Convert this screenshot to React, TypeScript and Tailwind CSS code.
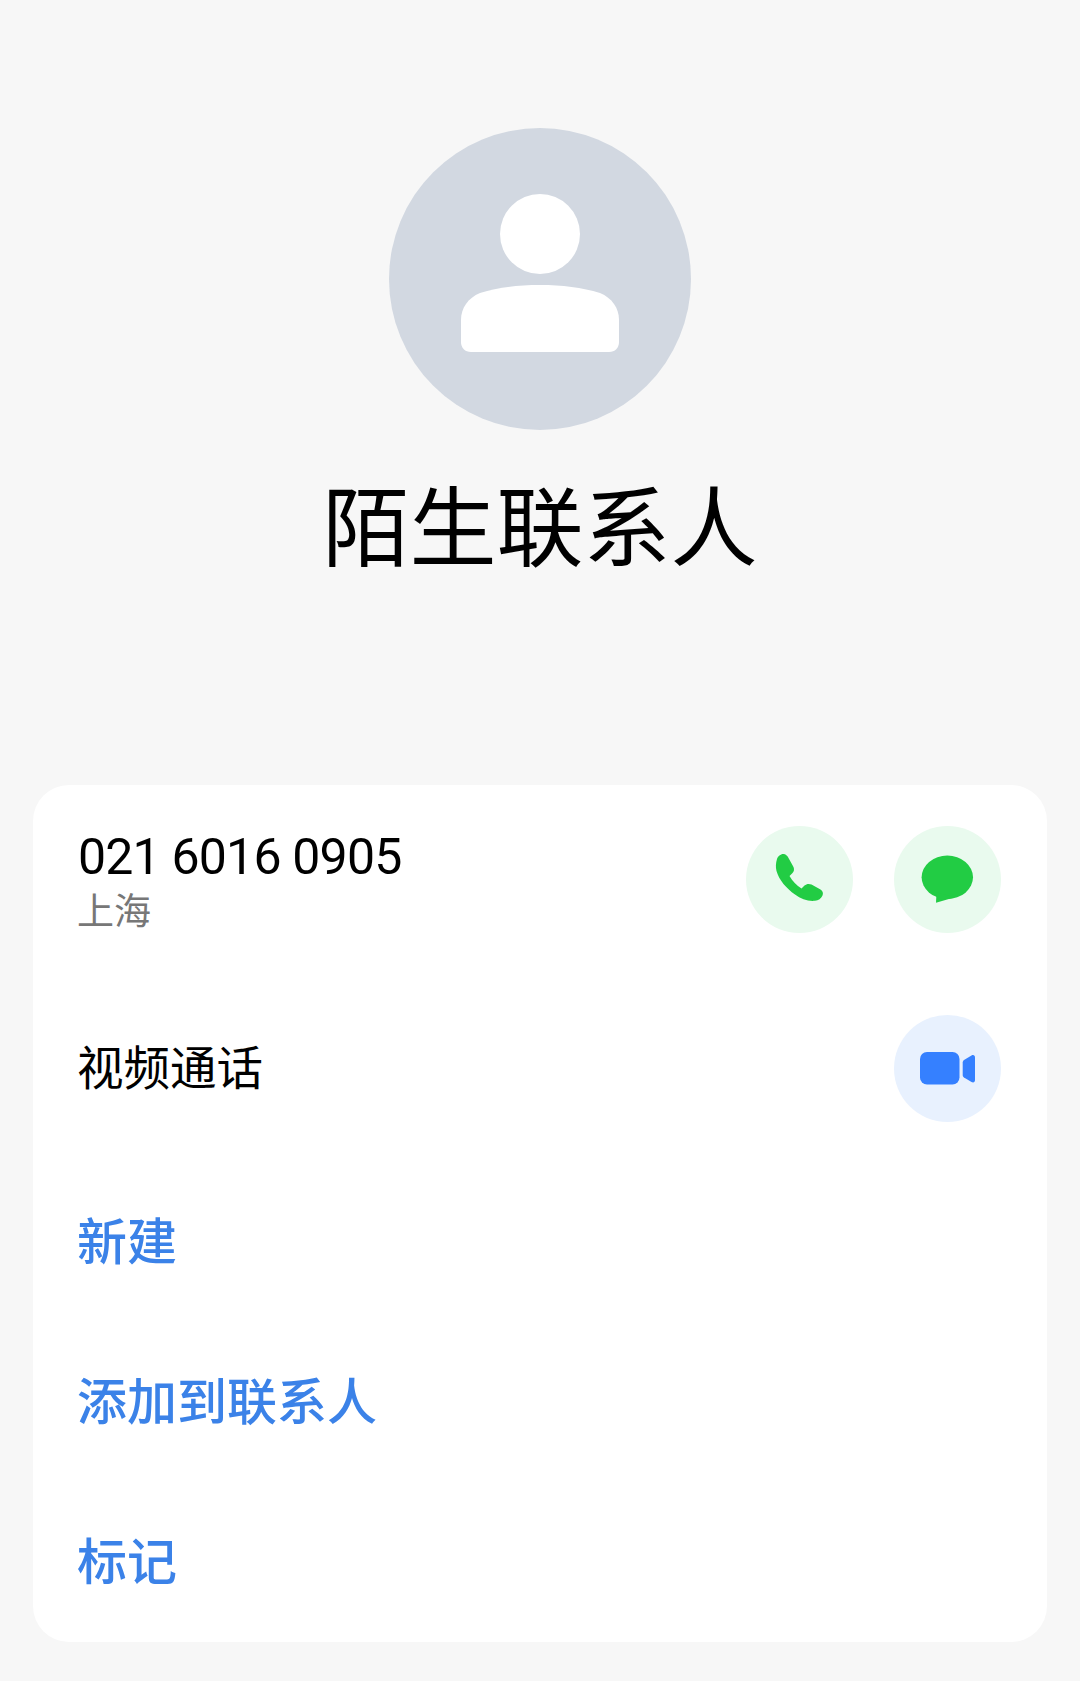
import React from "react";

const cjk = "font-['Noto_Sans_CJK_SC','Noto_Sans',sans-serif]";

function ActionButton({ bg, children }: { bg: string; children: React.ReactNode }) {
  return (
    <div className={`w-[107px] h-[107px] rounded-full shrink-0 ${bg}`}>
      <svg viewBox="0 0 107 107" className="w-full h-full">
        {children}
      </svg>
    </div>
  );
}

export default function App() {
  return (
    <div className={`w-[1080px] h-[1681px] bg-[#f7f7f7] overflow-hidden flex flex-col items-center pt-[128px] ${cjk}`}>
      {/* Avatar */}
      <div className="w-[302px] h-[302px] rounded-full bg-[#d2d8e1] shrink-0">
        <svg viewBox="0 0 302 302" className="w-full h-full">
          <circle cx="151" cy="106" r="40" fill="#fff" />
          <path
            d="M72 192C72 180 79 170 91 165C109 159.5 129 157 151 157C173 157 193 159.5 211 165C223 170 230 180 230 192V214C230 220 226 224 220 224H82C76 224 72 220 72 214Z"
            fill="#fff"
          />
        </svg>
      </div>

      <h1 className="mt-[34px] h-[116px] text-[87px] leading-[116px] font-normal text-black">陌生联系人</h1>

      {/* Detail card */}
      <div className="mt-[205px] w-[1014px] h-[857px] bg-white rounded-[36px] pl-[45px] pr-[46px] flex flex-col">
        <div className="mt-[41px] h-[107px] flex justify-between">
          <div>
            <div className="mt-[6px] h-[50px] text-[50px] leading-[50px] tracking-[-0.8px] text-black font-['Roboto',sans-serif]">
              021 6016 0905
            </div>
            <div className="-ml-[1px] mt-[3px] text-[37px] leading-[48px] text-[#777777]">上海</div>
          </div>
          <div className="flex gap-[41px]">
            <ActionButton bg="bg-[#e9faee]">
              <path
                d="M31 33C32 30 35 27.5 38 28C40 28.5 41.5 30 42.5 32L47.5 41C48.5 43.5 48 45.5 46.5 47L43.5 50C46.5 55 50.5 59.5 55.5 62.5L58.5 59.5C60.5 57.7 63 57.5 65.5 58.5L74.5 63.5C76.8 65 77.5 67 76.5 69.5C75.2 72.5 72.5 74.6 69 74.8C62 75.5 55 73 49 68.5C40.5 62.5 33 54 30.5 45C29.5 41 29.8 37 31 33Z"
                fill="#22cc44"
              />
            </ActionButton>
            <ActionButton bg="bg-[#e9faee]">
              <ellipse cx="53.3" cy="51.3" rx="25.7" ry="21.7" fill="#22cc44" />
              <path d="M42.5 66L42 76.7L60 71.5Z" fill="#22cc44" />
            </ActionButton>
          </div>
        </div>

        <div className="mt-[82px] h-[107px] flex items-center justify-between">
          <span className="-ml-[1px] pb-[8px] text-[46.5px] leading-[60px] font-normal text-black">视频通话</span>
          <ActionButton bg="bg-[#e8f1fe]">
            <rect x="26" y="37" width="39.5" height="32.5" rx="7" fill="#3580ff" />
            <path
              d="M68.7 47.5C68.7 46.5 69.2 45.7 70 45L77.5 40.5C79.5 39.5 81 40.5 81 42.5V65C81 67 79.5 68 77.5 67L70 62.5C69.2 62 68.7 61 68.7 60Z"
              fill="#3580ff"
            />
          </ActionButton>
        </div>

        <div className="-ml-[1px] mt-[83px] text-[50px] leading-[66px] font-medium text-[#3b82e8]">新建</div>
        <div className="-ml-[1px] mt-[94px] text-[50px] leading-[66px] font-medium text-[#3b82e8]">添加到联系人</div>
        <div className="-ml-[1px] mt-[94px] text-[50px] leading-[66px] font-medium text-[#3b82e8]">标记</div>
      </div>
    </div>
  );
}
